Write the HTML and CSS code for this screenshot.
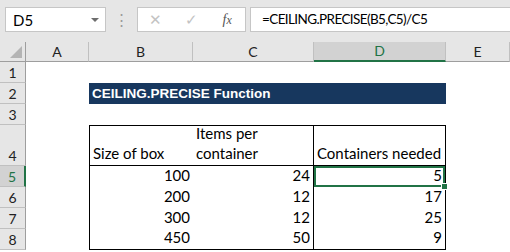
FILE: index.html
```html
<!DOCTYPE html>
<html lang="en">
<head>
    <meta charset="UTF-8">
    <title>CEILING.PRECISE</title>
    <link rel="stylesheet" href="styles.css">
</head>
<body>
    <div class="traka">
        <div class="imeBox">
            <span>D5</span>
            <span class="strelica"></span>
        </div>
        <div class="tocke">&#8942;</div>
        <div class="gumbi">
            <span class="gumb siv">&#10005;</span>
            <span class="gumb siv">&#10003;</span>
            <span class="gumb fx"><i>f</i><i>x</i></span>
        </div>
        <div class="formula">=CEILING.PRECISE(B5,C5)/C5</div>
    </div>

    <div class="list">
        <div class="zag kut"><span class="trokut"></span></div>
        <div class="zag">A</div>
        <div class="zag">B</div>
        <div class="zag">C</div>
        <div class="zag odabran">D</div>
        <div class="zag">E</div>

        <div class="red">1</div>
        <div></div><div></div><div></div><div></div><div></div>

        <div class="red">2</div>
        <div></div>
        <div class="naslov">CEILING.PRECISE Function</div>
        <div></div>

        <div class="red">3</div>
        <div></div><div></div><div></div><div></div><div></div>

        <div class="red">4</div>
        <div></div>
        <div class="c lijevo gore dolje">Size of box</div>
        <div class="c gore dolje desno">Items per<br>container</div>
        <div class="c gore dolje desno">Containers needed</div>
        <div></div>

        <div class="red redOdabran">5</div>
        <div></div>
        <div class="c lijevo broj">100</div>
        <div class="c desno broj">24</div>
        <div class="c desno broj aktivna">5<span class="ruckica"></span></div>
        <div></div>

        <div class="red">6</div>
        <div></div>
        <div class="c lijevo broj">200</div>
        <div class="c desno broj">12</div>
        <div class="c desno broj">17</div>
        <div></div>

        <div class="red">7</div>
        <div></div>
        <div class="c lijevo broj">300</div>
        <div class="c desno broj">12</div>
        <div class="c desno broj">25</div>
        <div></div>

        <div class="red">8</div>
        <div></div>
        <div class="c lijevo dolje broj">450</div>
        <div class="c desno dolje broj">50</div>
        <div class="c desno dolje broj">9</div>
        <div></div>
    </div>
</body>
</html>
```

FILE: styles.css
```css
body {
    margin: 0;
    width: 510px;
    height: 252px;
    overflow: hidden;
    background: #ffffff;
    font-family: Lato, "Liberation Sans", sans-serif;
    color: #000000;
}

.traka {
    display: flex;
    align-items: flex-start;
    height: 42px;
    padding: 7px 0 0 5px;
    box-sizing: border-box;
    background: #e6e6e6;
}
.imeBox {
    display: flex;
    justify-content: space-between;
    align-items: center;
    width: 101px;
    height: 25px;
    padding: 0 6px 0 7px;
    box-sizing: border-box;
    background: #ffffff;
    border: 1px solid #c6c6c6;
    font-size: 15px;
}
.strelica {
    width: 0;
    height: 0;
    border-left: 4px solid transparent;
    border-right: 4px solid transparent;
    border-top: 4px solid #6d6d6d;
}
.tocke {
    width: 31px;
    text-align: center;
    color: #9a9a9a;
    font-size: 15px;
    line-height: 25px;
}
.gumbi {
    display: flex;
    align-items: center;
    width: 109px;
    height: 25px;
    box-sizing: border-box;
    background: #ffffff;
    border: 1px solid #c6c6c6;
}
.gumb {
    width: 36px;
    text-align: center;
    font-size: 15px;
}
.siv {
    color: #c3c3c3;
}
.fx {
    font-family: "Liberation Serif", serif;
    color: #555555;
    font-size: 14px;
}
.fx i:last-child {
    font-size: 12px;
}
.formula {
    flex: 1;
    height: 25px;
    margin-left: 4px;
    padding-left: 11px;
    box-sizing: border-box;
    background: #ffffff;
    border: 1px solid #c6c6c6;
    border-right: none;
    font-size: 13.5px;
    letter-spacing: -0.6px;
    line-height: 23px;
    white-space: nowrap;
}

.list {
    display: grid;
    grid-template-columns: 26px 63px 104px 121px 132px 64px;
    grid-template-rows: 20px 21px 21px 21px 41px 21px 21px 21px 21px;
    font-size: 15px;
}
.zag {
    position: relative;
    background: #e6e6e6;
    border-right: 1px solid #c0c0c0;
    border-bottom: 1px solid #9e9e9e;
    text-align: center;
    line-height: 19px;
    font-size: 14px;
    color: #222222;
}
.kut {
    border-right-color: #9e9e9e;
}
.trokut {
    position: absolute;
    right: 3px;
    bottom: 3px;
    width: 0;
    height: 0;
    border-left: 12px solid transparent;
    border-bottom: 12px solid #b4b4b4;
}
.odabran {
    background: #d2d2d2;
    color: #217346;
    border-bottom: 2px solid #217346;
    line-height: 18px;
}
.red {
    display: flex;
    align-items: flex-end;
    justify-content: center;
    background: #e6e6e6;
    border-right: 1px solid #9e9e9e;
    border-bottom: 1px solid #c0c0c0;
    font-size: 14px;
    color: #222222;
    padding-bottom: 1px;
}
.redOdabran {
    background: #d2d2d2;
    color: #217346;
    border-right: 2px solid #217346;
}

.naslov {
    grid-column: span 3;
    background: #17375e;
    color: #ffffff;
    font-family: "Liberation Sans", sans-serif;
    font-weight: bold;
    font-size: 13.5px;
    line-height: 21px;
    padding-left: 3px;
    white-space: nowrap;
}

.c {
    display: flex;
    flex-direction: column;
    justify-content: flex-end;
    padding: 0 3px 2px 3px;
    line-height: 20px;
    white-space: nowrap;
    box-sizing: border-box;
}
.broj {
    align-items: flex-end;
}
.lijevo {
    border-left: 1px solid #000000;
}
.desno {
    border-right: 1px solid #000000;
}
.gore {
    border-top: 1px solid #000000;
}
.dolje {
    border-bottom: 1px solid #000000;
}
.aktivna {
    position: relative;
    box-shadow: inset 0 0 0 2px #217346;
}
.ruckica {
    position: absolute;
    right: -3px;
    bottom: -3px;
    width: 5px;
    height: 5px;
    background: #217346;
    border: 1px solid #ffffff;
}
```
